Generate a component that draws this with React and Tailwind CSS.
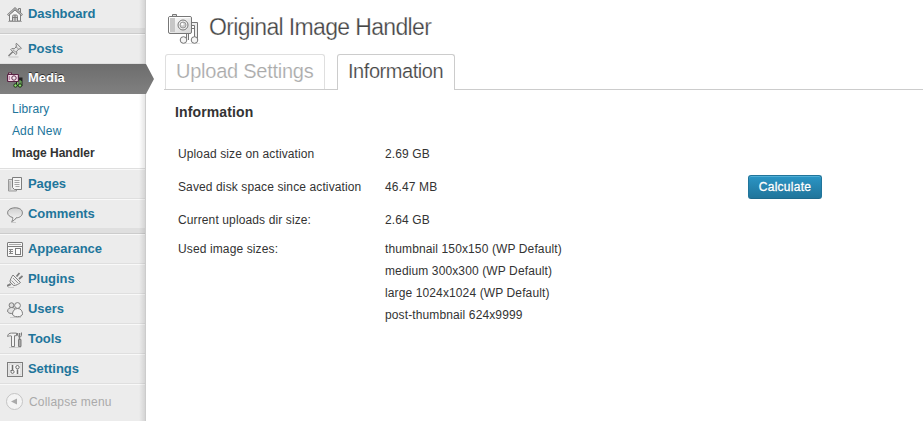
import React from 'react';

const Svg = ({ children, className = 'h-4 w-4' }) => (
  <svg viewBox="0 0 16 16" className={`${className} shrink-0`} fill="none" stroke="#7d7d7d" strokeWidth="1">
    {children}
  </svg>
);

const HomeIcon = () => (
  <Svg>
    <path d="M1 14.500h14" stroke="#b5b5b5" />
    <path d="M2.500 7.500v6.500h11V7.500L8 3z" fill="#f4f4f4" />
    <path d="M11.500 3V1.500h2V6" fill="#ddd" />
    <path d="M.8 8.200 8 1.600l7.200 6.600" strokeWidth="2.200" />
    <path d="M.8 8.200 8 1.600l7.200 6.600" stroke="#e4e4e4" strokeWidth=".7" />
    <path d="M5.500 14V9.500q0-1.500 1.200-1.500h2.600q1.200 0 1.200 1.500V14M8 8v6M5.500 10.500h5" fill="#ccc" />
  </Svg>
);
const PinIcon = () => (
  <Svg>
    <path d="M1.500 15h10" stroke="#c6c6c6" />
    <path d="M1.500 14 6 9.500" strokeWidth="1.400" />
    <path d="m9.400 1.200 5 5-.9.9-1.500-.3-2.400 2.400.2 2.500-1 .9-5-5 1-1 2.400.2 2.400-2.400-.6-1.700z" fill="#e5e5e5" />
    <path d="m8.500 4.500 3 2.500M6 8l3.500 2.500" stroke="#999" />
  </Svg>
);
const MediaIcon = () => (
  <Svg>
    <path d="M10 14V6.500h4.500V14M10 8.500h4.500" stroke="#222" strokeWidth="2" />
    <path d="M10.500 13V9h3.500v4" stroke="#77c65e" />
    <rect x="1.500" y="1" width="3" height="1.500" fill="#fff" stroke="#5a2444" />
    <rect x=".6" y="2.500" width="10.800" height="7" rx=".5" fill="#f8dfee" stroke="#5a2444" strokeWidth="1.200" />
    <path d="M2.500 4v4" stroke="#c58cab" />
    <circle cx="7" cy="6" r="2.200" fill="#fff" stroke="#5a2444" />
    <circle cx="7" cy="6" r=".6" fill="#c58cab" stroke="none" />
    <circle cx="8.500" cy="13.500" r="1.700" fill="#8ee070" stroke="#1c3016" />
    <circle cx="13" cy="13.500" r="1.700" fill="#8ee070" stroke="#1c3016" />
  </Svg>
);
const PagesIcon = () => (
  <Svg>
    <path d="M5.500 2.500h-4v11.500h8v-2" fill="#ddd" stroke="#999" />
    <path d="M3 4v9" stroke="#aaa" />
    <path d="M5.500 .5h9v12h-7l-2-2z" fill="#f6f6f6" />
    <path d="M7.500 3.500h5M7.500 5.500h5M7.500 7.500h5M8.500 9.500h4" stroke="#a5a5a5" />
  </Svg>
);
const CommentIcon = () => (
  <Svg>
    <defs>
      <linearGradient id="bubble" x1="0" y1="0" x2="0" y2="1">
        <stop stopColor="#cfcfcf" />
        <stop offset="1" stopColor="#fafafa" />
      </linearGradient>
    </defs>
    <path d="M4 15.500h5" stroke="#ccc" />
    <path d="M8.200 .8c4.200 0 7.200 2 7.200 5s-2.800 5-6.200 5c-1 1.700-2.500 3-4.500 3.700.8-1 1.200-2.500 1-4C3 9.900.6 8 .6 5.800c0-3 3.400-5 7.600-5z" fill="url(#bubble)" />
  </Svg>
);
const AppearanceIcon = () => (
  <Svg>
    <rect x=".5" y=".5" width="15" height="14" rx=".5" fill="#f8f8f8" />
    <path d="M2 2.500h12" stroke="#aaa" />
    <path d="M1 4.500h14" />
    <path d="M2 7.500h4M2 9.500h4M2 11.500h4M3.500 7v5" stroke="#888" />
    <rect x="8.500" y="6.500" width="5" height="6" fill="#fff" />
  </Svg>
);
const PluginIcon = () => (
  <Svg>
    <path d="M1 15.500h6" stroke="#c8c8c8" />
    <path d="M.3 14.500c.4-1.800 1.700-.8 3.300-2.500" strokeWidth="2" />
    <path d="m9.500 4.500 3-3.500M12 7l3.500-3" strokeWidth="1.800" />
    <path d="m6 3 7.500 7.500c-2 1.500-4 3-6.800 3L3 10c0-2.500 1.500-4.700 3-7z" fill="#eee" />
    <path d="m6 6 5 5M4.500 8.500l3.500 3.500" stroke="#999" />
  </Svg>
);
const UsersIcon = () => (
  <Svg>
    <path d="M3 15.500h11" stroke="#ccc" />
    <circle cx="4.500" cy="3.200" r="2.400" fill="#ddd" />
    <path d="M.6 9C.6 7 2.500 5.500 4.700 5.500s3.500 1 4 3c0 2-1.500 3-4 3S.6 10.500.6 9z" fill="#e2e2e2" />
    <circle cx="10.500" cy="3.500" r="2.900" fill="#f0f0f0" />
    <path d="M5.500 12c0-2.800 2-5.500 5.200-5.500s4.800 2.700 4.800 5.200c0 2-2 3-5 3s-5-1-5-2.700z" fill="#f4f4f4" />
  </Svg>
);
const ToolsIcon = () => (
  <Svg>
    <path d="M2 15.500h12" stroke="#ccc" />
    <path d="M.6 4.500c.2-2.500 1.700-3.400 4-3.400h4.900v2.600H7.500V14.500h-3V4C3 3.500 2 4 .6 4.500z" fill="#f3f3f3" />
    <path d="M12.500 1v6" strokeWidth="1.600" />
    <path d="M10.500 1v2l1 1.500M14.500 .5v3l-1 1.500" />
    <path d="M11.500 7.500h2.500v7h-2.500z" fill="#aaa" />
  </Svg>
);
const SettingsIcon = () => (
  <Svg>
    <rect x=".5" y=".5" width="15" height="14" fill="#fafafa" />
    <rect x="2" y="2" width="12" height="11" stroke="#ccc" fill="#f6f6f6" />
    <path d="M5.500 3v5M10.500 7.500v4.500" strokeWidth="1.500" stroke="#6c6c6c" />
    <circle cx="5.500" cy="9.800" r="1.600" stroke="#6c6c6c" />
    <path d="M3.500 8.500h2" stroke="#6c6c6c" />
    <circle cx="10.500" cy="5.200" r="1.700" stroke="#6c6c6c" />
  </Svg>
);

const Item = ({ icon, label, className = 'h-[30px]' }) => (
  <div className={`flex items-start border-t border-t-[#f9f9f9] border-b border-b-[#dfdfdf] pl-[7px] ${className}`}>
    <span className="mt-[7px]">{icon}</span>
    <span className="ml-[5px] mt-[4px] text-[13px] leading-[20px] font-bold tracking-[-0.05px] text-[#21759b]">{label}</span>
  </div>
);
const Separator = () => <div className="h-[5px] shrink-0 border-b border-[#ccc] bg-[#dfdfdf]" />;

const Row = ({ label, value, className }) => (
  <div className={`flex items-center ${className}`}>
    <span className="w-[207px]">{label}</span>
    <span className="w-[363px]">{value}</span>
    {label.startsWith('Saved') && (
      <button className="h-6 w-[74px] rounded-[3px] border border-[#21759b] border-b-[#1e6a8d] bg-gradient-to-b from-[#2a95c5] to-[#21759b] text-[12px] leading-[22px] tracking-[0.25px] text-white shadow-[inset_0_1px_0_rgba(120,200,230,0.5)] [text-shadow:0_1px_0_rgba(0,0,0,0.1)] [-webkit-text-stroke:0.3px_white]">
        Calculate
      </button>
    )}
  </div>
);

export default function App() {
  return (
    <div className="flex h-[421px] w-[923px] overflow-hidden bg-white font-['Liberation_Sans',Arial,sans-serif] text-[#333]">
      <aside className="relative flex h-[421px] w-[146px] shrink-0 flex-col border-r border-[#ccc] bg-[#ececec]">
        <Item icon={<HomeIcon />} label="Dashboard" className="-mt-px h-[30px]" />
        <Separator />
        <Item icon={<PinIcon />} label="Posts" />
        <div className="relative z-10 flex h-[30px] items-start bg-gradient-to-b from-[#6d6d6d] to-[#808080] pl-[7px]">
          <span className="mt-2"><MediaIcon /></span>
          <span className="ml-[5px] mt-[4px] text-[13px] leading-[20px] font-bold text-white [text-shadow:0_-1px_0_#333]">Media</span>
          <svg className="absolute top-0 left-[145px] h-[30px] w-[9px]" viewBox="0 0 9 30">
            <defs>
              <linearGradient id="arrow" x1="0" y1="0" x2="0" y2="1">
                <stop stopColor="#6d6d6d" />
                <stop offset="1" stopColor="#808080" />
              </linearGradient>
            </defs>
            <path d="M0 0h1l8 15-8 15H0z" fill="url(#arrow)" />
          </svg>
        </div>
        <div className="h-[75px] border-b border-[#dfdfdf] bg-white pt-1 pl-3 text-[12px] leading-[22px] tracking-[0.1px] text-[#21759b]">
          <div>Library</div>
          <div>Add New</div>
          <div className="font-bold tracking-normal text-[#333]">Image Handler</div>
        </div>
        <Item icon={<PagesIcon />} label="Pages" />
        <Item icon={<CommentIcon />} label="Comments" />
        <Separator />
        <Item icon={<AppearanceIcon />} label="Appearance" />
        <Item icon={<PluginIcon />} label="Plugins" />
        <Item icon={<UsersIcon />} label="Users" />
        <Item icon={<ToolsIcon />} label="Tools" />
        <Item icon={<SettingsIcon />} label="Settings" />
        <div className="flex h-[37px] items-start border-t border-[#f9f9f9] pt-[8px] pl-[6px] text-[12px] leading-[18px] tracking-[0.2px] text-[#aaa]">
          <svg className="h-[17px] w-[17px]" viewBox="0 0 17 17">
            <circle cx="8.500" cy="8.500" r="8" fill="#f4f4f4" stroke="#c4c4c4" />
            <path d="M5 8.500 11 5.500v6z" fill="#aaa" />
          </svg>
          <span className="ml-[6px]">Collapse menu</span>
        </div>
        <div className="absolute top-0 right-0 h-full w-[6px] bg-gradient-to-r from-transparent to-black/10" />
      </aside>

      <main className="min-w-0 flex-1">
        <header className="flex h-[54px] items-start pl-[22px]">
          <svg className="mt-[13px] h-[32px] w-[32px]" viewBox="0 0 32 32" fill="none" stroke="#777">
            <defs>
              <linearGradient id="cam" x1="0" y1="0" x2="1" y2="1">
                <stop stopColor="#fff" />
                <stop offset="1" stopColor="#d5d5d5" />
              </linearGradient>
            </defs>
            <path d="M14 30.500h18" stroke="#e6e6e6" />
            <path d="M18.500 27V9.500h11V27M26.500 27V12.500h-6V27M26.500 15.500h-6" fill="#eee" />
            <circle cx="15.500" cy="27" r="3.300" fill="#f5f5f5" />
            <circle cx="26.500" cy="27" r="3.300" fill="#f5f5f5" />
            <path d="M4.500 3V1.500h4V3" fill="#ddd" />
            <rect x=".5" y="3.500" width="23" height="17" rx="1.500" fill="url(#cam)" />
            <path d="M2 5h5v14H2z" fill="#c7c7c7" stroke="none" />
            <path d="M1.500 19V4.500h21" stroke="#fff" />
            <circle cx="15" cy="12" r="5" fill="#f1f1f1" />
            <circle cx="15" cy="12" r="3" fill="#ccc" stroke="#999" />
            <circle cx="14.300" cy="11.300" r="1.200" fill="#fff" stroke="none" />
          </svg>
          <h1 className="mt-[13px] ml-[9px] text-[23px] leading-[29px] font-normal tracking-[-0.65px] whitespace-nowrap text-[#464646] [-webkit-text-stroke:0.25px_white]">Original Image Handler</h1>
        </header>
        <nav className="ml-[18px] flex h-[36px] items-end border-b border-[#ccc] text-[20px] leading-[24px] whitespace-nowrap">
          <div className="ml-px h-[35px] w-[160px] rounded-t-[3px] border border-b-0 border-[#dfdfdf] pt-[4px] pl-[10px] tracking-[-0.25px] text-[#aaa] [-webkit-text-stroke:0.2px_white]">Upload Settings</div>
          <div className="-mb-px ml-3 h-9 w-[118px] rounded-t-[3px] border border-b-0 border-[#ccc] bg-white pt-[4px] pl-[10px] tracking-[-0.45px] text-[#464646] [-webkit-text-stroke:0.2px_white]">Information</div>
        </nav>
        <section className="pl-8 text-[12px] tracking-[0.12px]">
          <h3 className="-ml-[3px] mt-[12px] text-[14px] leading-5 font-bold">Information</h3>
          <Row className="mt-[15px] h-[33px]" label="Upload size on activation" value="2.69 GB" />
          <Row className="h-[33px]" label="Saved disk space since activation" value="46.47 MB" />
          <Row className="h-[33px]" label="Current uploads dir size:" value="2.64 GB" />
          <div className="mt-[2px] flex leading-[22px]">
            <span className="w-[207px]">Used image sizes:</span>
            <div>
              <div>thumbnail 150x150 (WP Default)</div>
              <div>medium 300x300 (WP Default)</div>
              <div>large 1024x1024 (WP Default)</div>
              <div>post-thumbnail 624x9999</div>
            </div>
          </div>
        </section>
      </main>
    </div>
  );
}
